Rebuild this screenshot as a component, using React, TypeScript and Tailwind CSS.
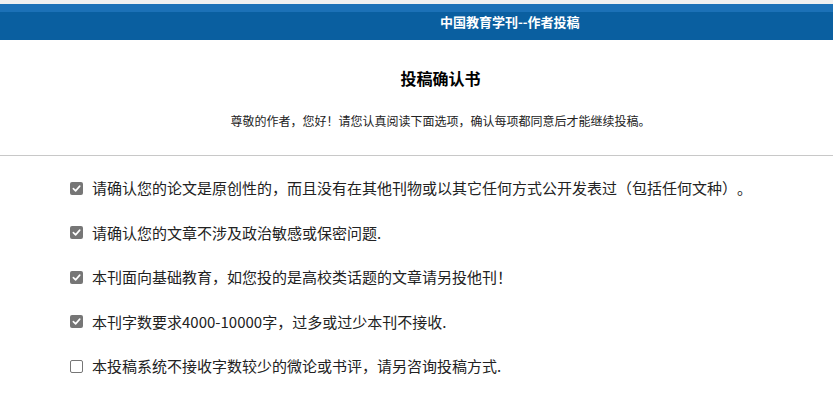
const items: { text: string; checked: boolean }[] = [
  {
    text: "请确认您的论文是原创性的，而且没有在其他刊物或以其它任何方式公开发表过（包括任何文种）。",
    checked: true,
  },
  { text: "请确认您的文章不涉及政治敏感或保密问题.", checked: true },
  { text: "本刊面向基础教育，如您投的是高校类话题的文章请另投他刊！", checked: true },
  { text: "本刊字数要求4000-10000字，过多或过少本刊不接收.", checked: true },
  { text: "本投稿系统不接收字数较少的微论或书评，请另咨询投稿方式.", checked: false },
];

function Box({ checked }: { checked: boolean }) {
  if (!checked) {
    return (
      <span className="block h-[13px] w-[13px] shrink-0 rounded-[2px] border border-[#767676] bg-white" />
    );
  }
  return (
    <span className="flex h-[13px] w-[13px] shrink-0 items-center justify-center rounded-[2px] bg-[#767676]">
      <svg width="9" height="9" viewBox="0 0 10 10">
        <path
          d="M1.5 5.2 L4 7.6 L8.6 2.4"
          fill="none"
          stroke="white"
          strokeWidth="1.8"
          strokeLinecap="round"
          strokeLinejoin="round"
        />
      </svg>
    </span>
  );
}

export default function App() {
  return (
    <div className="min-h-[398px] bg-white font-['Noto_Sans_CJK_SC','Microsoft_YaHei',sans-serif] text-[#222] [text-spacing-trim:space-all]">
      <div className="h-1 bg-[#f0f0f0]" />
      <div className="flex h-9 items-center bg-[linear-gradient(to_bottom,#1c71b7_0px,#1c71b7_8px,#0a5fa0_8px,#0a5fa0_100%)] pl-[440px]">
        <span className="text-[13px] font-bold text-white">中国教育学刊--作者投稿</span>
      </div>

      <div className="pl-[48px] text-center">
        <h1 className="mt-[26px] text-[16px] leading-[24px] font-bold text-black">投稿确认书</h1>
        <p className="mt-[22px] text-[12px] leading-[18px] text-[#222]">
          尊敬的作者，您好！请您认真阅读下面选项，确认每项都同意后才能继续投稿。
        </p>
      </div>

      <div className="mt-[25px] h-px bg-[#c8c8c8]" />

      <ul className="mt-[10px] pl-[70px]">
        {items.map((it) => (
          <li key={it.text} className="flex h-[44.5px] items-center gap-[9px]">
            <Box checked={it.checked} />
            <span className="text-[15px] leading-[20px] text-[#222]">{it.text}</span>
          </li>
        ))}
      </ul>
    </div>
  );
}
